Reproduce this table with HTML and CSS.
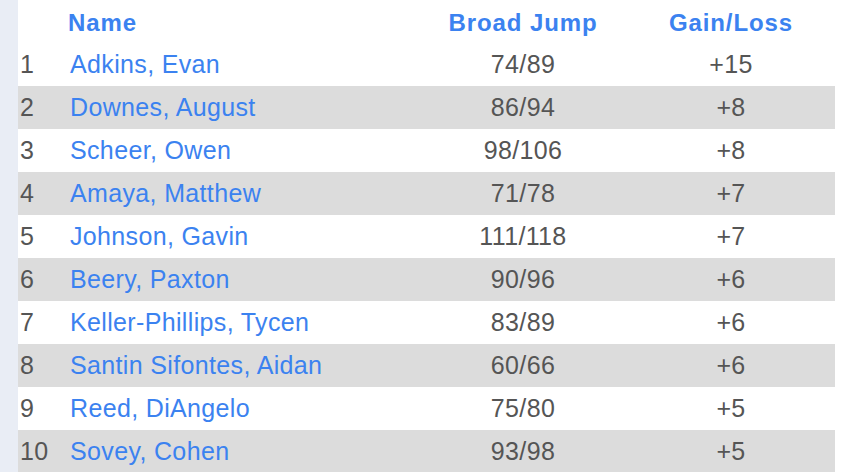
FILE: index.html
```html
<!DOCTYPE html>
<html>
<head>
<meta charset="utf-8">
<link rel="stylesheet" href="styles.css">
</head>
<body>
<div class="page">
  <div class="strip"></div>
  <div class="board">
    <div class="row head">
      <div class="c num"></div>
      <div class="c name">Name</div>
      <div class="c mid">Broad Jump</div>
      <div class="c mid">Gain/Loss</div>
    </div>
    <div class="row"><div class="c num">1</div><div class="c name">Adkins, Evan</div><div class="c mid">74/89</div><div class="c mid">+15</div></div>
    <div class="row alt"><div class="c num">2</div><div class="c name">Downes, August</div><div class="c mid">86/94</div><div class="c mid">+8</div></div>
    <div class="row"><div class="c num">3</div><div class="c name">Scheer, Owen</div><div class="c mid">98/106</div><div class="c mid">+8</div></div>
    <div class="row alt"><div class="c num">4</div><div class="c name">Amaya, Matthew</div><div class="c mid">71/78</div><div class="c mid">+7</div></div>
    <div class="row"><div class="c num">5</div><div class="c name">Johnson, Gavin</div><div class="c mid">111/118</div><div class="c mid">+7</div></div>
    <div class="row alt"><div class="c num">6</div><div class="c name">Beery, Paxton</div><div class="c mid">90/96</div><div class="c mid">+6</div></div>
    <div class="row"><div class="c num">7</div><div class="c name">Keller-Phillips, Tycen</div><div class="c mid">83/89</div><div class="c mid">+6</div></div>
    <div class="row alt"><div class="c num">8</div><div class="c name">Santin Sifontes, Aidan</div><div class="c mid">60/66</div><div class="c mid">+6</div></div>
    <div class="row"><div class="c num">9</div><div class="c name">Reed, DiAngelo</div><div class="c mid">75/80</div><div class="c mid">+5</div></div>
    <div class="row alt"><div class="c num">10</div><div class="c name">Sovey, Cohen</div><div class="c mid">93/98</div><div class="c mid">+5</div></div>
  </div>
</div>
</body>
</html>
```
FILE: styles.css
```css
html, body {
  margin: 0;
  padding: 0;
  background: #ffffff;
  overflow: hidden;
}
.page {
  display: flex;
  width: 842px;
  height: 472px;
  font-family: "Liberation Sans", Arial, sans-serif;
}
.strip {
  width: 18px;
  flex: none;
  background: #e9edf5;
}
.board {
  width: 817px;
  flex: none;
}
.row {
  display: grid;
  grid-template-columns: 50px 351px 208px 208px;
  height: 43px;
  line-height: 43px;
  font-size: 25px;
  letter-spacing: 0.35px;
  color: #555555;
}
.row.alt {
  background: #dcdcdc;
}
.c {
  white-space: nowrap;
}
.num {
  padding-left: 2px;
}
.name {
  padding-left: 2px;
  color: #3b82f0;
}
.mid {
  text-align: center;
}
.head {
  font-size: 24px;
  font-weight: bold;
  letter-spacing: 0.9px;
  color: #3b82f0;
  padding-top: 2px;
  height: 41px;
  line-height: 41px;
}
.head .name {
  padding-left: 0;
}
```
